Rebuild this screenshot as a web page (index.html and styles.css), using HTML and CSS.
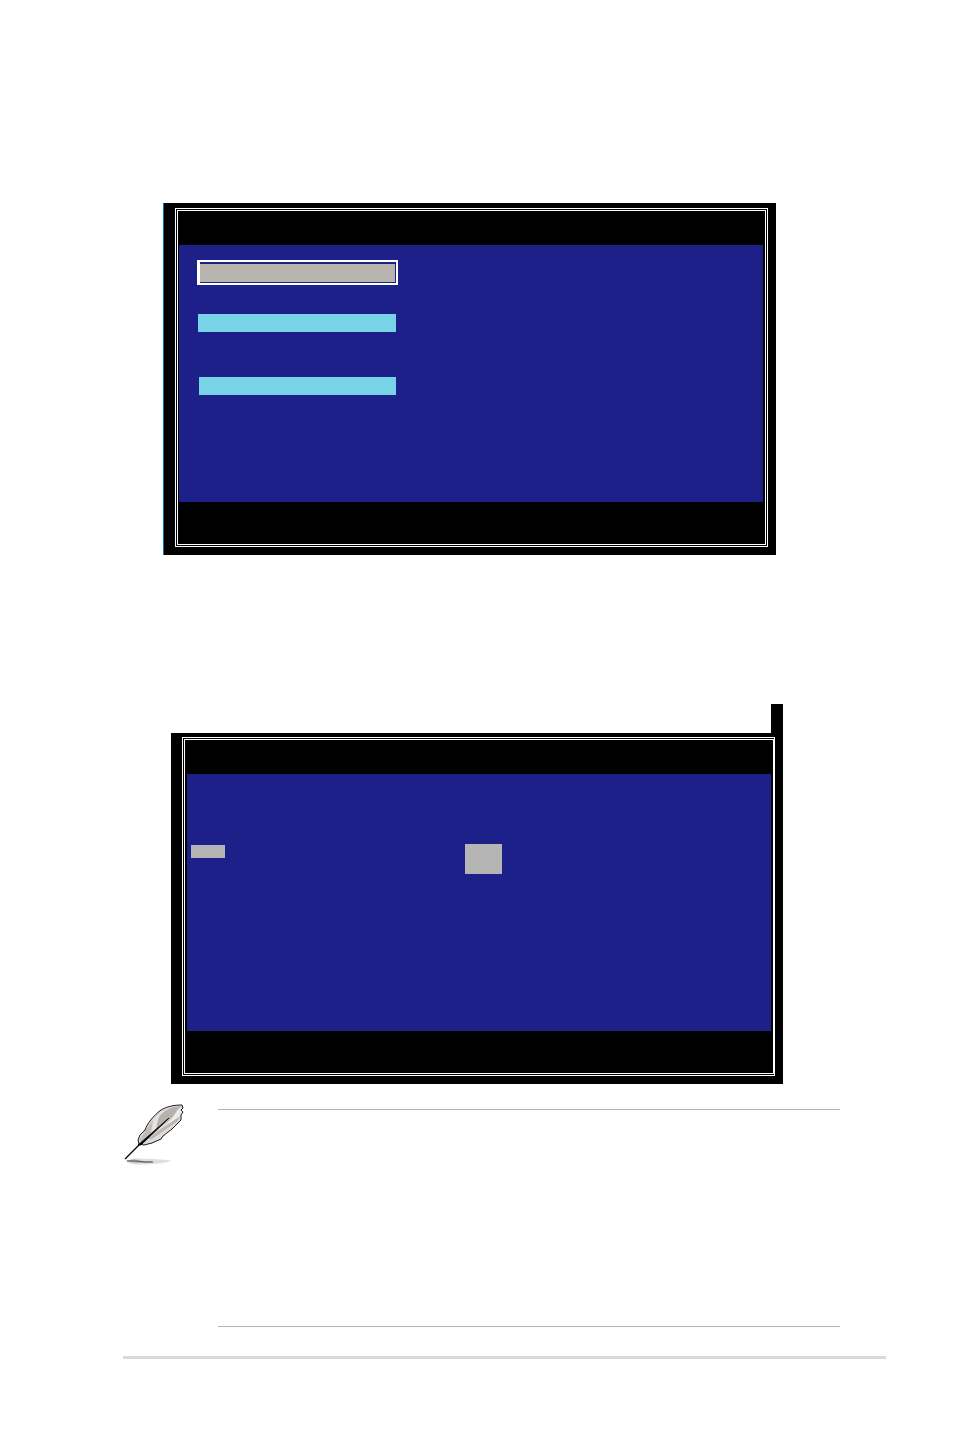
FILE: index.html
```html
<!DOCTYPE html>
<html lang="en">
<head>
<meta charset="utf-8">
<title>Setup screens</title>
<link rel="stylesheet" href="styles.css">
</head>
<body>
<main class="page">
  <section class="screen screen-menu">
    <div class="frame">
      <div class="panel menu">
        <div class="item-selected"><div class="item-fill"></div></div>
        <div class="item item-first"></div>
        <div class="item item-second"></div>
      </div>
    </div>
  </section>

  <div class="tab"></div>
  <section class="screen screen-detail">
    <div class="frame frame-detail">
      <div class="panel detail">
        <div class="chip"></div>
        <div class="block"></div>
      </div>
    </div>
  </section>

  <section class="note">
    <svg class="feather" viewBox="0 0 72 72" aria-hidden="true">
      <path d="M8 63C15 59 25 61 34 61L50 62L53 63C41 67 24 67 13 66Z" fill="#e0dfdd"/>
      <path d="M8 63L16 61L25 63L36 63L31 65L17 65Z" fill="#b9b6b2"/>
      <path d="M9 63L18 63L27 64L35 64" fill="none" stroke="#55514e" stroke-width="1"/>
      <path d="M21 46L20 42L22 37L27 32C29 26 35 18 43 12C50 8 57 7 64 7L65 10L63 12L65 14L63 17L63 22L54 31L45 38L43 41L34 45L26 47Z" fill="#dddcda"/>
      <path d="M38 29C38 22 42 14 55 9L63 8C60 12 56 19 53 21L40 31L34 36Z" fill="#b5b2ac"/>
      <path d="M27 33L35 22L33 35L24 43L21 43Z" fill="#c0bdb8"/>
      <path d="M54 20L61 10L64 14L61 19L48 27Z" fill="#ecebe9"/>
      <path d="M30 41L40 33L52 25L62 18L60 23L47 32L34 41Z" fill="#bbb8b3"/>
      <path d="M36 22L41 17L38 31L33 35Z" fill="#e5e4e2"/>
      <path d="M21 46L20 42L22 37L27 32C29 26 35 18 43 12C50 8 57 7 64 7L65 10L63 12L65 14L63 17L63 22L54 31L45 38L43 41L34 45L26 47Z" fill="none" stroke="#191919" stroke-width="1"/>
      <path d="M7 61L22 46" fill="none" stroke="#000" stroke-width="1.3"/>
      <path d="M20 47L51 20L23 47Z" fill="#000" stroke="#000" stroke-width=".8"/>
    </svg>
    <div class="note-body"></div>
  </section>
  <hr class="footer-rule">
</main>
</body>
</html>
```

FILE: styles.css
```css
* {
  box-sizing: border-box;
}

body {
  margin: 0;
  background: #fff;
}

.page {
  display: flex;
  flex-direction: column;
  padding: 203px 0 78px;
}

.screen {
  background: #000;
}

.screen-menu {
  margin: 0 178px 0 163px;
  padding: 5px 8px 8px 11px;
  border-left: 1px solid #0079be;
}

.frame {
  border: 3px double #fff;
  padding: 34px 2px 42px 1px;
}

.panel {
  height: 257px;
  background: #1d2088;
}

.menu {
  display: flex;
  flex-direction: column;
  align-items: flex-start;
  padding: 15px 18px;
}

.item-selected {
  width: 201px;
  padding: 2px 1px 1px 0;
  border: 2px solid #fff;
  border-left-width: 3px;
}

.item-fill {
  height: 18px;
  background: #b8b4af;
}

.item {
  width: 198px;
  height: 18px;
  margin-left: 1px;
  background: #79d3e6;
}

.item-first {
  margin-top: 29px;
}

.item-second {
  width: 197px;
  margin-top: 45px;
  margin-left: 2px;
}

.tab {
  align-self: flex-end;
  width: 12px;
  height: 29px;
  margin: 149px 171px 0 0;
  background: #000;
}

.screen-detail {
  margin: 0 171px;
  padding: 4px 8px 8px 11px;
}

.frame-detail {
  border-right: 2px solid #fff;
  padding: 34px 2px 42px;
}

.detail {
  display: flex;
  align-items: flex-start;
  gap: 240px;
  padding: 70px 4px;
}

.chip {
  width: 34px;
  height: 13px;
  margin-top: 1px;
  background: #b5b5b6;
}

.block {
  width: 37px;
  height: 30px;
  background: #b5b5b6;
}

.note {
  display: flex;
  align-items: flex-start;
  gap: 28px;
  margin: 14px 114px 0 118px;
}

.feather {
  flex: none;
  width: 72px;
  height: 72px;
}

.note-body {
  flex: 1;
  height: 218px;
  margin-top: 11px;
  border: solid #b5b5b6;
  border-width: 1px 0;
}

.footer-rule {
  height: 3px;
  margin: 29px 68px 0 123px;
  border: 0;
  background: #d9d9d9;
}
```
